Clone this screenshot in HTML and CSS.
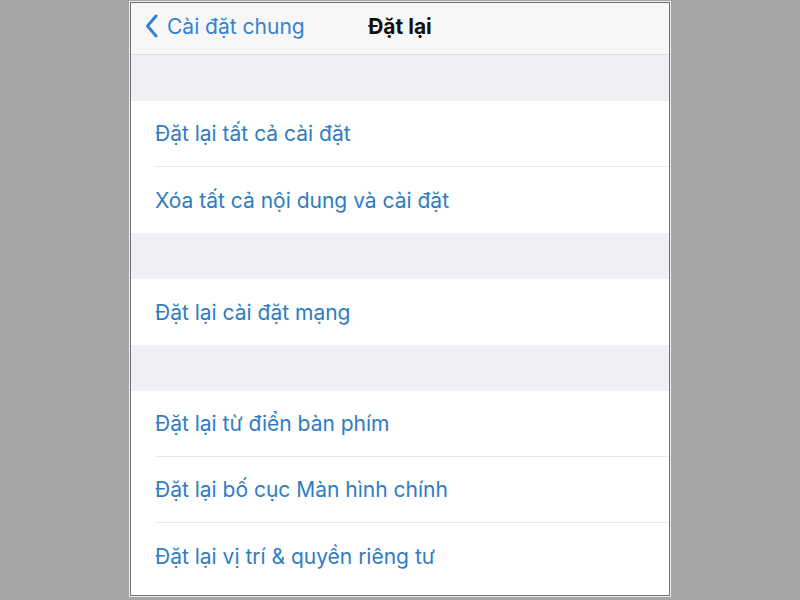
FILE: index.html
```html
<!DOCTYPE html>
<html lang="vi">
  <head>
    <meta charset="UTF-8" />
    <meta name="viewport" content="width=device-width, initial-scale=1.0" />
    <title>Đặt lại</title>
    <link rel="stylesheet" href="styles.css">
  </head>
  <body>
    <div class="screen">
      <div class="phone">
        <!-- Thanh điều hướng -->
        <header class="nav-bar">
          <a class="back-link" href="#">
            <svg class="back-icon" width="13" height="24" viewBox="0 0 13 24">
              <path d="M11 2 L2.5 12 L11 22" fill="none" stroke="currentColor" stroke-width="3" stroke-linecap="round" stroke-linejoin="round" />
            </svg>
            <span>Cài đặt chung</span>
          </a>
          <h1 class="nav-title">Đặt lại</h1>
        </header>

        <div class="section-gap"></div>
        <ul class="group">
          <li class="row">Đặt lại tất cả cài đặt</li>
          <li class="row">Xóa tất cả nội dung và cài đặt</li>
        </ul>

        <div class="section-gap"></div>
        <ul class="group">
          <li class="row">Đặt lại cài đặt mạng</li>
        </ul>

        <div class="section-gap"></div>
        <ul class="group group-last">
          <li class="row">Đặt lại từ điển bàn phím</li>
          <li class="row">Đặt lại bố cục Màn hình chính</li>
          <li class="row">Đặt lại vị trí &amp; quyền riêng tư</li>
        </ul>
      </div>
    </div>
  </body>
</html>
```

FILE: styles.css
```css
* {
  box-sizing: border-box;
  margin: 0;
  padding: 0;
}

body {
  background-color: #a6a6a6;
  font-family: Inter, "Open Sans", "Liberation Sans", sans-serif;
  height: 100vh;
  overflow: hidden;
}

.screen {
  width: 542px;
  height: 596px;
  margin: 1px auto 0;
  border: 1px solid #ececec;
  background-color: #fff;
}

.phone {
  height: 100%;
  display: flex;
  flex-direction: column;
  border: 1px solid #707070;
  background-color: #efeff4;
  overflow: hidden;
}

.nav-bar {
  position: relative;
  flex-shrink: 0;
  height: 52px;
  display: flex;
  align-items: center;
  justify-content: center;
  padding-bottom: 5px;
  background-color: #f7f7f8;
  border-bottom: 1px solid #dcdce0;
}

.back-link {
  position: absolute;
  left: 14px;
  top: 0;
  bottom: 5px;
  display: flex;
  align-items: center;
  gap: 9px;
  color: #3283d2;
  text-decoration: none;
  font-size: 21px;
}

.back-icon {
  flex-shrink: 0;
}

.nav-title {
  font-size: 21px;
  font-weight: 700;
  color: #111;
}

.section-gap {
  flex-shrink: 0;
  height: 46px;
}

.group {
  flex-shrink: 0;
  list-style: none;
  background-color: #fff;
}

.group-last {
  flex-grow: 1;
}

.row {
  height: 66px;
  display: flex;
  align-items: center;
  margin-left: 24px;
  font-size: 21px;
  color: #2f7cc2;
  border-bottom: 1px solid #e8e8ec;
}

.row:last-child {
  border-bottom: none;
}
```
